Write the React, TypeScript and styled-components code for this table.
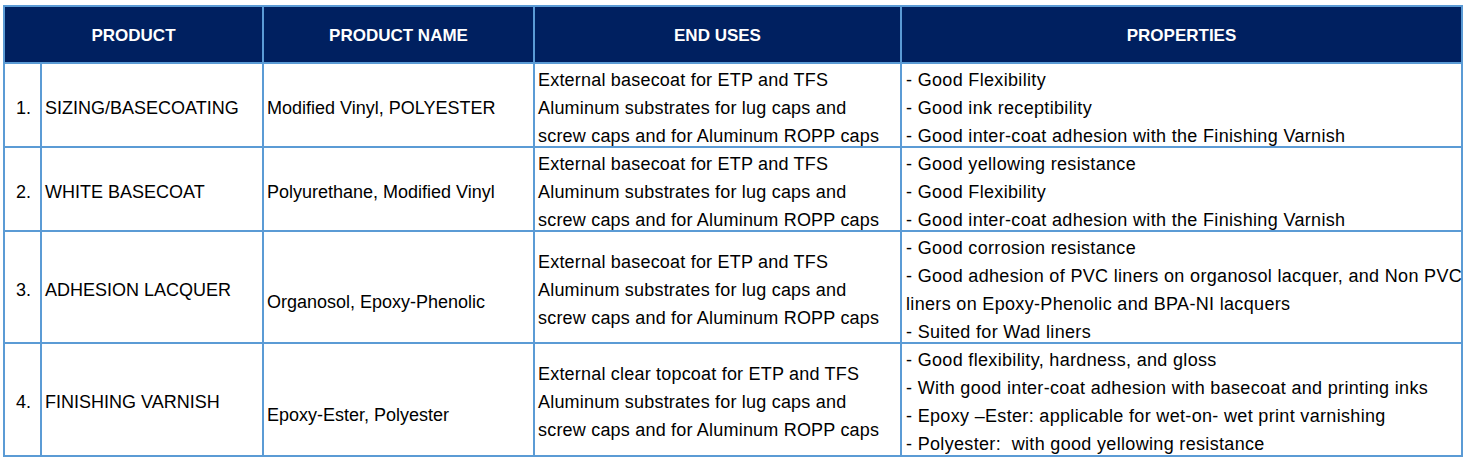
import React from 'react';
import styled, { createGlobalStyle } from 'styled-components';

const BORDER = '#5b9bd5';
const NAVY = '#002060';

type Align = 'middle' | 'lower';

interface ProductRow {
  no: string;
  product: string;
  name: string;
  nameAlign: Align;
  uses: string[];
  properties: string[];
}

const HEADERS = [
  { label: 'PRODUCT', span: 2 },
  { label: 'PRODUCT NAME', span: 1 },
  { label: 'END USES', span: 1 },
  { label: 'PROPERTIES', span: 1 },
];

const STANDARD_USES = [
  'External basecoat for ETP and TFS',
  'Aluminum substrates for lug caps and',
  'screw caps and for Aluminum ROPP caps',
];

const PRODUCTS: ProductRow[] = [
  {
    no: '1.',
    product: 'SIZING/BASECOATING',
    name: 'Modified Vinyl, POLYESTER',
    nameAlign: 'middle',
    uses: STANDARD_USES,
    properties: [
      '- Good Flexibility',
      '- Good ink receptibility',
      '- Good inter-coat adhesion with the Finishing Varnish',
    ],
  },
  {
    no: '2.',
    product: 'WHITE BASECOAT',
    name: 'Polyurethane, Modified Vinyl',
    nameAlign: 'middle',
    uses: STANDARD_USES,
    properties: [
      '- Good yellowing resistance',
      '- Good Flexibility',
      '- Good inter-coat adhesion with the Finishing Varnish',
    ],
  },
  {
    no: '3.',
    product: 'ADHESION LACQUER',
    name: 'Organosol, Epoxy-Phenolic',
    nameAlign: 'lower',
    uses: STANDARD_USES,
    properties: [
      '- Good corrosion resistance',
      '- Good adhesion of PVC liners on organosol lacquer, and Non PVC',
      'liners on Epoxy-Phenolic and BPA-NI lacquers',
      '- Suited for Wad liners',
    ],
  },
  {
    no: '4.',
    product: 'FINISHING VARNISH',
    name: 'Epoxy-Ester, Polyester',
    nameAlign: 'lower',
    uses: [
      'External clear topcoat for ETP and TFS',
      'Aluminum substrates for lug caps and',
      'screw caps and for Aluminum ROPP caps',
    ],
    properties: [
      '- Good flexibility, hardness, and gloss',
      '- With good inter-coat adhesion with basecoat and printing inks',
      '- Epoxy \u2013Ester: applicable for wet-on- wet print varnishing',
      '- Polyester:  with good yellowing resistance',
    ],
  },
];

const GlobalStyle = createGlobalStyle`
  html, body {
    margin: 0;
    padding: 0;
    background: #ffffff;
  }
  body {
    font-family: 'Liberation Sans', Arial, sans-serif;
    color: #000000;
  }
`;

const Page = styled.div`
  padding: 5px 0 0 3px;
`;

const Sheet = styled.div`
  display: grid;
  grid-template-columns: 37px 222px 271px 367px 561px;
  grid-template-rows: 57px 84px 84px 112px 113px;
  width: fit-content;
  border-left: 2px solid ${BORDER};
  border-top: 2px solid ${BORDER};
`;

const Cell = styled.div`
  box-sizing: border-box;
  border-right: 2px solid ${BORDER};
  border-bottom: 2px solid ${BORDER};
  display: flex;
  flex-direction: column;
  font-size: 18px;
  line-height: 28px;
  white-space: pre;
  overflow: visible;
`;

const HeaderCell = styled(Cell)<{ $span: number }>`
  grid-column: span ${({ $span }) => $span};
  background: ${NAVY};
  color: #ffffff;
  font-weight: 700;
  font-size: 17px;
  align-items: center;
  justify-content: center;
  padding-top: 3px;
`;

const NumberCell = styled(Cell)`
  align-items: center;
  justify-content: center;
  padding: 5px 0 0 2px;
`;

const MiddleCell = styled(Cell)`
  justify-content: center;
  padding: 5px 3px 0;
`;

const UsesCell = styled(MiddleCell)`
  letter-spacing: 0.2px;
`;

const NameCell = styled(Cell)<{ $align: Align }>`
  justify-content: ${({ $align }) => ($align === 'lower' ? 'flex-end' : 'center')};
  padding: ${({ $align }) => ($align === 'lower' ? '0 3px 26px' : '5px 3px 0')};
`;

const ListCell = styled(Cell)`
  justify-content: flex-start;
  padding: 2px 3px 0 4px;
  letter-spacing: 0.33px;
`;

const Line = styled.span`
  display: block;
`;

export default function App() {
  return (
    <Page>
      <GlobalStyle />
      <Sheet>
        {HEADERS.map(({ label, span }) => (
          <HeaderCell key={label} $span={span}>
            {label}
          </HeaderCell>
        ))}
        {PRODUCTS.map((row) => (
          <React.Fragment key={row.no}>
            <NumberCell>{row.no}</NumberCell>
            <MiddleCell>{row.product}</MiddleCell>
            <NameCell $align={row.nameAlign}>{row.name}</NameCell>
            <UsesCell>
              {row.uses.map((text) => (
                <Line key={text}>{text}</Line>
              ))}
            </UsesCell>
            <ListCell>
              {row.properties.map((text) => (
                <Line key={text}>{text}</Line>
              ))}
            </ListCell>
          </React.Fragment>
        ))}
      </Sheet>
    </Page>
  );
}
